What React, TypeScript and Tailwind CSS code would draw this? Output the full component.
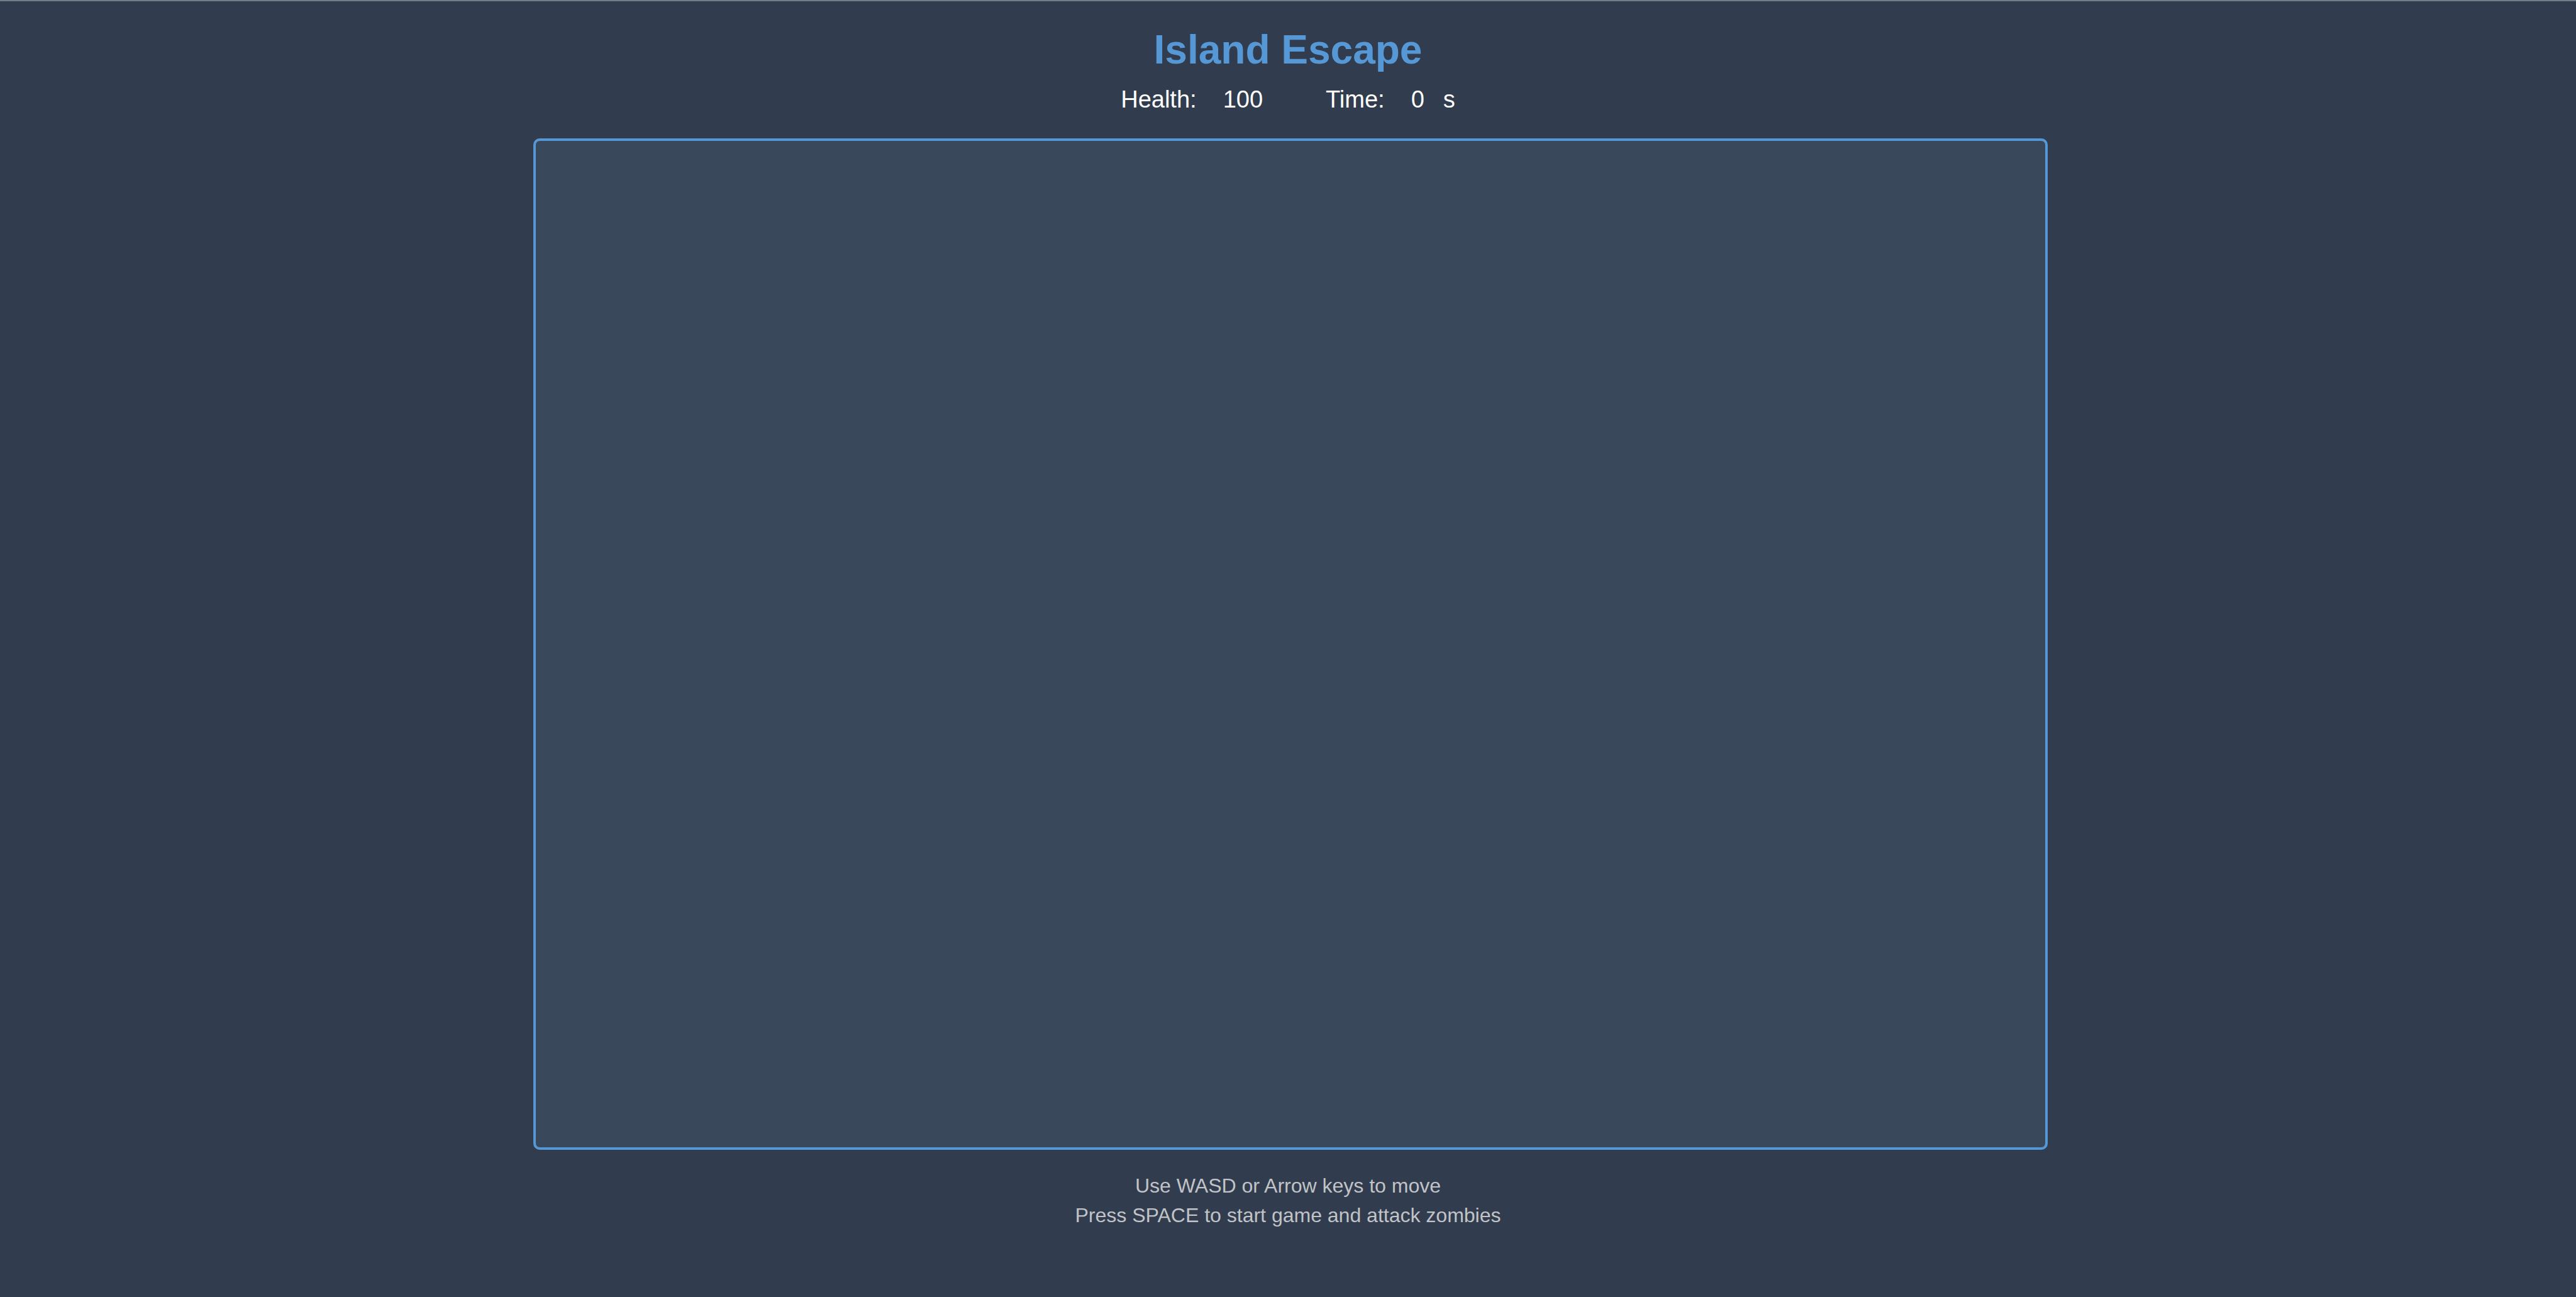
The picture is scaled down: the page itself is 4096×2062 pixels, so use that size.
import React from "react";

function Stats({ health, time }: { health: number; time: number }) {
  return (
    <div className="mt-[18px] flex justify-center gap-[100px] text-[38px] leading-12 text-white">
      <div className="flex gap-[42px]">
        <span>Health:</span>
        <span>{health}</span>
      </div>
      <div className="flex">
        <span>Time:</span>
        <span className="ml-[42px]">{time}</span>
        <span className="ml-[30px]">s</span>
      </div>
    </div>
  );
}

export default function App() {
  return (
    <main className="flex min-h-screen flex-col items-center border-t-2 border-[#737f88] bg-[#313d4e] pt-10 text-center font-['Liberation_Sans',Arial,sans-serif]">
      <h1 className="text-[64px] leading-[74px] font-bold text-[#5698d6]">Island Escape</h1>
      <Stats health={100} time={0} />
      <div className="mt-[38px] flex w-full justify-center pl-2">
        <section
          aria-label="Game area"
          className="aspect-[2408/1608] w-full max-w-[2408px] rounded-[10px] border-4 border-[#5698d6] bg-[#39495b]"
        />
      </div>
      <div className="mt-[34px] text-[32px] leading-[47px] text-[#c1c3c7]">
        <p>Use WASD or Arrow keys to move</p>
        <p>Press SPACE to start game and attack zombies</p>
      </div>
    </main>
  );
}
